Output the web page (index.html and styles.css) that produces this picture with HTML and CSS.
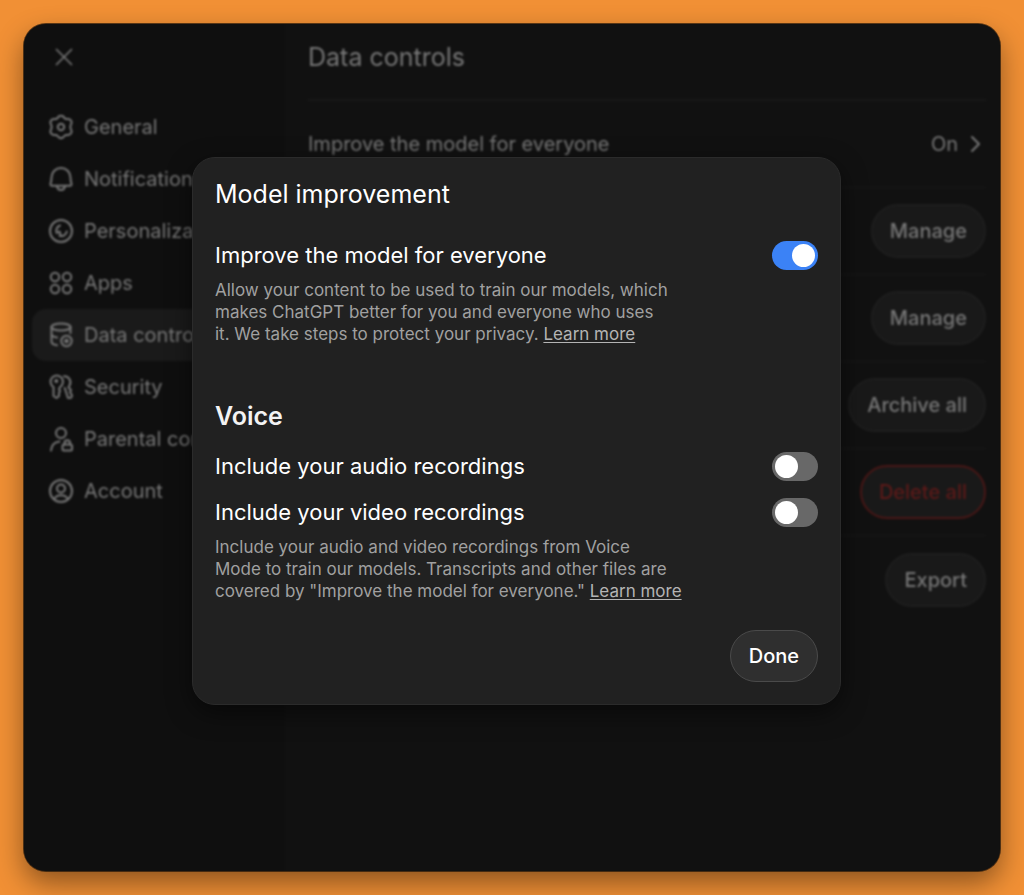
FILE: index.html
```html
<!DOCTYPE html>
<html lang="en">
<head>
  <meta charset="UTF-8">
  <meta name="viewport" content="width=device-width, initial-scale=1">
  <title>Data controls</title>
  <link rel="stylesheet" href="styles.css">
</head>
<body>
  <div class="window">
    <div class="settings">
      <aside class="sidebar">
        <button class="close" type="button" aria-label="Close">
          <svg class="icon" viewBox="0 0 24 24"><path d="M3 3l18 18M21 3L3 21"/></svg>
        </button>
        <nav class="menu">
          <a class="menu-item" href="#">
            <svg class="icon" viewBox="0 0 24 24"><path d="M10.200 1.200a3.600 3.600 0 0 1 3.600 0c1.400.8 1.600 2.500 3.200 2.700h2.200c1.400 0 2.600.8 3.200 2.200.5 1.200.2 2.300-.5 3.500-.8 1.500-.8 3.100 0 4.600.7 1.200 1 2.300.5 3.500-.6 1.400-1.800 2.200-3.200 2.200H17c-1.600.2-1.800 1.900-3.200 2.700a3.600 3.600 0 0 1-3.600 0C8.800 21.800 8.600 20.100 7 19.900H4.800c-1.400 0-2.600-.8-3.200-2.200-.5-1.200-.2-2.300.5-3.500.8-1.500.8-3.100 0-4.600-.7-1.200-1-2.300-.5-3.500.6-1.400 1.800-2.200 3.200-2.200H7c1.600-.2 1.800-1.900 3.200-2.700z"/><circle cx="12" cy="12" r="3.200"/></svg>
            General
          </a>
          <a class="menu-item" href="#">
            <svg class="icon" viewBox="0 0 24 24"><path d="M2.500 10.500a9.500 9.500 0 0 1 19 0c0 3 .4 4.500.9 6 .4 1.300-.2 2.300-1.500 2.300H3.100c-1.300 0-1.900-1-1.500-2.300.5-1.500.9-3 .9-6z"/><path d="M8 19c.4 2.500 2 4 4 4s3.600-1.500 4-4"/></svg>
            Notifications
          </a>
          <a class="menu-item" href="#">
            <svg class="icon" viewBox="0 0 24 24"><circle cx="12" cy="12" r="11"/><path d="M11 6.500c-3.200 1-4.500 4.500-3.200 7.500l2.700-1.500M10.500 16.800c3.300 1 6.500-.8 7.300-4.300M11 13.500l.5 3.300"/></svg>
            Personalization
          </a>
          <a class="menu-item" href="#">
            <svg class="icon" viewBox="0 0 24 24"><circle cx="6" cy="6" r="4.200"/><circle cx="18" cy="6" r="4.200"/><circle cx="6" cy="18" r="4.200"/><circle cx="18" cy="18" r="4.200"/></svg>
            Apps
          </a>
          <a class="menu-item active" href="#" aria-current="page">
            <svg class="icon" viewBox="0 0 24 24"><ellipse cx="12" cy="4" rx="9.500" ry="3.500"/><path d="M2.500 4v14.500c0 2 2.200 3.300 5.500 3.700M21.500 4v6M2.500 11c0 1.800 2.200 3 5.500 3.500"/><circle cx="17.500" cy="18" r="5.200"/><circle cx="17.500" cy="18" r="1.300"/></svg>
            Data controls
          </a>
          <a class="menu-item" href="#">
            <svg class="icon" viewBox="0 0 24 24"><path d="M4.500 12A6.200 6.200 0 1 1 11 12l-1 2.200 1 1.800-1 2v3l-2.500 2L4.500 21z"/><circle cx="7.300" cy="6" r="1"/><path d="M15 1.200c5 0 8 4.800 5.500 9.300l-1 2 2.500 2.500-1 2 2 3.500-1 2.300-3 .2-3.200-10"/></svg>
            Security
          </a>
          <a class="menu-item" href="#">
            <svg class="icon" viewBox="0 0 24 24"><circle cx="12" cy="6" r="5"/><path d="M2 23.500c.5-5.500 3.500-8.500 8.500-9"/><rect x="13.500" y="17.500" width="9.500" height="6" rx="1.500"/><path d="M15.500 17.500V16a2.800 2.800 0 0 1 5.600 0v1.500"/></svg>
            Parental controls
          </a>
          <a class="menu-item" href="#">
            <svg class="icon" viewBox="0 0 24 24"><circle cx="12" cy="12" r="11"/><circle cx="12" cy="9.500" r="4"/><path d="M5 20c1.500-2.500 4-3.800 7-3.800s5.500 1.300 7 3.800"/></svg>
            Account
          </a>
        </nav>
      </aside>

      <main class="content">
        <h1 class="content-title">Data controls</h1>
        <div class="row">
          <span>Improve the model for everyone</span>
          <button class="row-value" type="button">
            On
            <svg class="chevron" viewBox="0 0 12 18"><path d="M2 2l7 7-7 7"/></svg>
          </button>
        </div>
        <div class="row"><button class="pill" type="button">Manage</button></div>
        <div class="row"><button class="pill" type="button">Manage</button></div>
        <div class="row"><button class="pill" type="button">Archive all</button></div>
        <div class="row"><button class="pill danger" type="button">Delete all</button></div>
        <div class="row"><button class="pill" type="button">Export</button></div>
      </main>
    </div>

    <div class="overlay">
      <section class="modal" role="dialog" aria-modal="true" aria-labelledby="modal-title">
        <h2 class="modal-title" id="modal-title">Model improvement</h2>

        <div class="option">
          <label for="improve">Improve the model for everyone</label>
          <input class="switch" type="checkbox" id="improve" checked>
        </div>
        <p class="hint">
          Allow your content to be used to train our models, which<br>
          makes ChatGPT better for you and everyone who uses<br>
          it. We take steps to protect your privacy. <a href="#">Learn more</a>
        </p>

        <h3 class="modal-subtitle">Voice</h3>
        <div class="option">
          <label for="audio">Include your audio recordings</label>
          <input class="switch" type="checkbox" id="audio">
        </div>
        <div class="option">
          <label for="video">Include your video recordings</label>
          <input class="switch" type="checkbox" id="video">
        </div>
        <p class="hint">
          Include your audio and video recordings from Voice<br>
          Mode to train our models. Transcripts and other files are<br>
          covered by "Improve the model for everyone." <a href="#">Learn more</a>
        </p>

        <div class="modal-footer">
          <button class="done" type="button">Done</button>
        </div>
      </section>
    </div>
  </div>
</body>
</html>
```
FILE: styles.css
```css
* {
  box-sizing: border-box;
}

body {
  margin: 0;
  min-height: 100vh;
  padding: 24px;
  display: flex;
  background: #f19035;
  font-family: Inter, "Liberation Sans", sans-serif;
  color: #fff;
}

h1, h2, h3, p {
  margin: 0;
}

button {
  font-family: inherit;
  color: inherit;
  cursor: pointer;
}

.window {
  position: relative;
  flex: 1;
  display: flex;
  overflow: hidden;
  border-radius: 22px;
  background: #101010;
  box-shadow: 0 0 0 1px rgba(30, 20, 10, 0.7), 0 12px 28px rgba(0, 0, 0, 0.42);
}

/* page behind the dialog */
.settings {
  flex: 1;
  display: flex;
  color: #767676;
  font-size: 20px;
  font-weight: 400;
  filter: blur(1px);
}

.sidebar {
  width: 261px;
  padding: 20px 8px;
  background: #0f0f0f;
}

.close {
  display: flex;
  margin-left: 19px;
  padding: 3px;
  border: none;
  background: none;
}

.close .icon {
  width: 20px;
  height: 20px;
}

.icon, .chevron {
  fill: none;
  stroke: currentColor;
  stroke-width: 2;
  stroke-linecap: round;
  stroke-linejoin: round;
}

.icon {
  flex: none;
  width: 24px;
  height: 24px;
  overflow: visible;
}

.menu {
  margin-top: 31px;
}

.menu-item {
  display: flex;
  align-items: center;
  gap: 11px;
  height: 52px;
  padding: 0 17px;
  border-radius: 14px;
  color: inherit;
  text-decoration: none;
  white-space: nowrap;
}

.menu-item.active {
  background: #1a1a1a;
}

.content {
  flex: 1;
  padding: 0 14px 0 23px;
  background: #111;
}

.content-title {
  height: 77px;
  padding-top: 16px;
  border-bottom: 2px solid #181818;
  font-size: 25px;
  line-height: 34px;
  font-weight: 400;
}

.row {
  display: flex;
  align-items: center;
  justify-content: flex-end;
  height: 87px;
  border-bottom: 1px solid #181818;
}

.row:last-child {
  border-bottom: none;
}

.row span {
  margin-right: auto;
}

.row-value {
  display: flex;
  align-items: center;
  gap: 12px;
  padding: 0 4px;
  border: none;
  background: none;
  font-size: 20px;
  font-weight: 400;
}

.chevron {
  width: 12px;
  height: 18px;
}

.pill {
  height: 54px;
  padding: 0 17px;
  border: 2px solid #1e1e1e;
  border-radius: 27px;
  background: #191919;
  font-size: 20px;
  font-weight: 500;
}

.pill.danger {
  border-color: #491716;
  color: #5c1918;
}

/* dialog */
.overlay {
  position: absolute;
  inset: 0;
  display: flex;
  align-items: flex-start;
  justify-content: center;
  padding: 133px 159px 24px 168px;
}

.modal {
  flex: 1;
  max-width: 649px;
  padding: 22px;
  border: 1px solid #2b2b2b;
  border-radius: 23px;
  background: #212121;
  box-shadow: 0 8px 24px rgba(0, 0, 0, 0.5);
}

.modal-title {
  margin-bottom: 32px;
  font-size: 25px;
  line-height: 28px;
  font-weight: 400;
}

.modal-subtitle {
  margin: 56px 0 20px;
  font-size: 25px;
  line-height: 30px;
  font-weight: 600;
  color: #f3f3f3;
}

.option {
  display: flex;
  align-items: center;
  justify-content: space-between;
  font-size: 22px;
  line-height: 30px;
}

.option + .option {
  margin-top: 16px;
}

.switch {
  appearance: none;
  display: flex;
  align-items: center;
  width: 46px;
  height: 29px;
  margin: 0;
  padding: 0 3px;
  border-radius: 15px;
  background: #686868;
  cursor: pointer;
}

.switch::before {
  content: "";
  width: 23px;
  height: 23px;
  border-radius: 50%;
  background: #fff;
}

.switch:checked {
  justify-content: flex-end;
  background: #3b82f6;
}

.hint {
  margin-top: 9px;
  font-size: 17px;
  line-height: 22px;
  color: #a0a0a0;
}

.hint a {
  color: #b4b4b4;
  text-underline-offset: 2px;
}

.modal-footer {
  display: flex;
  justify-content: flex-end;
  margin-top: 28px;
}

.done {
  height: 52px;
  padding: 0 18px;
  border: 1px solid #4a4a4a;
  border-radius: 26px;
  background: #2f2f2f;
  font-size: 20px;
  font-weight: 500;
}
```
